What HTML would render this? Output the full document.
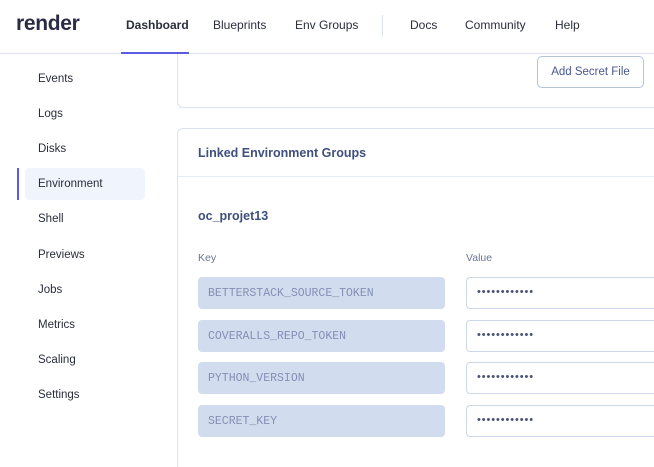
<!DOCTYPE html>
<html style="width:654px;height:467px;overflow:hidden"><head><style>
*{box-sizing:border-box;margin:0;padding:0}
body{width:654px;height:467px;overflow:hidden;background:#fff;font-family:"Liberation Sans",sans-serif;position:relative;color:#2a2d3a}
.a{position:absolute}
.nav{font-size:12px;color:#2a2d3a;top:18px}
.side{left:38px;font-size:11.5px;color:#2a2d3a}
.key{left:198px;width:247px;height:32px;background:#d1dcee;border-radius:4px;font-family:"Liberation Mono",monospace;font-size:11.5px;color:#8490b4;padding:10px 0 0 10px}
.val{left:466px;width:188px;height:32px;border:1px solid #cdd6ea;border-right:none;border-radius:4px 0 0 4px;font-size:11px;color:#4a5275;padding:8px 0 0 10px;letter-spacing:0.9px}
</style></head><body>
<div class="a" style="left:177px;top:20px;width:477px;height:88px;border:1px solid #dbe3f0;border-right:none;border-radius:6px 0 0 6px"></div>
<div class="a" style="left:0;top:0;width:654px;height:53px;background:#fff"></div>
<div class="a" style="left:16px;top:12px;font-size:21px;font-weight:bold;color:#2a2b45;letter-spacing:-0.3px">render</div>
<div class="a nav" style="left:126px;font-weight:bold">Dashboard</div>
<div class="a nav" style="left:213px">Blueprints</div>
<div class="a nav" style="left:295px">Env Groups</div>
<div class="a" style="left:382px;top:15px;width:1px;height:21px;background:#dbe3f0"></div>
<div class="a nav" style="left:410px">Docs</div>
<div class="a nav" style="left:465px">Community</div>
<div class="a nav" style="left:555px">Help</div>
<div class="a" style="left:0;top:53px;width:654px;height:1px;background:#dbe3f0"></div>
<div class="a" style="left:121px;top:52px;width:68px;height:2px;background:#5b5ce0"></div>

<div class="a side" style="top:73px">Events</div>
<div class="a side" style="top:108px">Logs</div>
<div class="a side" style="top:143px">Disks</div>
<div class="a" style="left:25px;top:168px;width:120px;height:32px;background:#f0f4fd;border-radius:4px"></div>
<div class="a" style="left:17px;top:168px;width:2px;height:32px;background:#5b5ce0"></div>
<div class="a side" style="top:178px">Environment</div>
<div class="a side" style="top:213px">Shell</div>
<div class="a side" style="top:249px">Previews</div>
<div class="a side" style="top:284px">Jobs</div>
<div class="a side" style="top:319px">Metrics</div>
<div class="a side" style="top:354px">Scaling</div>
<div class="a side" style="top:389px">Settings</div>

<div class="a" style="left:537px;top:56px;width:107px;height:32px;border:1px solid #b6c2dc;border-radius:5px;font-size:11.5px;color:#4a5890;text-align:center;padding-top:9px">Add Secret File</div>

<div class="a" style="left:177px;top:128px;width:477px;height:339px;border:1px solid #dbe3f0;border-right:none;border-bottom:none;border-radius:6px 0 0 0"></div>
<div class="a" style="left:178px;top:176px;width:476px;height:1px;background:#e6ecf5"></div>
<div class="a" style="left:198px;top:146px;font-size:12.5px;font-weight:bold;color:#3f4f7e">Linked Environment Groups</div>
<div class="a" style="left:198px;top:209px;font-size:12.5px;font-weight:bold;color:#3f4f7e">oc_projet13</div>
<div class="a" style="left:198px;top:252px;font-size:10.5px;color:#6b7595">Key</div>
<div class="a" style="left:466px;top:252px;font-size:10.5px;color:#6b7595">Value</div>

<div class="a key" style="top:277px">BETTERSTACK_SOURCE_TOKEN</div>
<div class="a val" style="top:277px">••••••••••••</div>
<div class="a key" style="top:320px">COVERALLS_REPO_TOKEN</div>
<div class="a val" style="top:320px">••••••••••••</div>
<div class="a key" style="top:362px">PYTHON_VERSION</div>
<div class="a val" style="top:362px">••••••••••••</div>
<div class="a key" style="top:405px">SECRET_KEY</div>
<div class="a val" style="top:405px">••••••••••••</div>
</body></html>
